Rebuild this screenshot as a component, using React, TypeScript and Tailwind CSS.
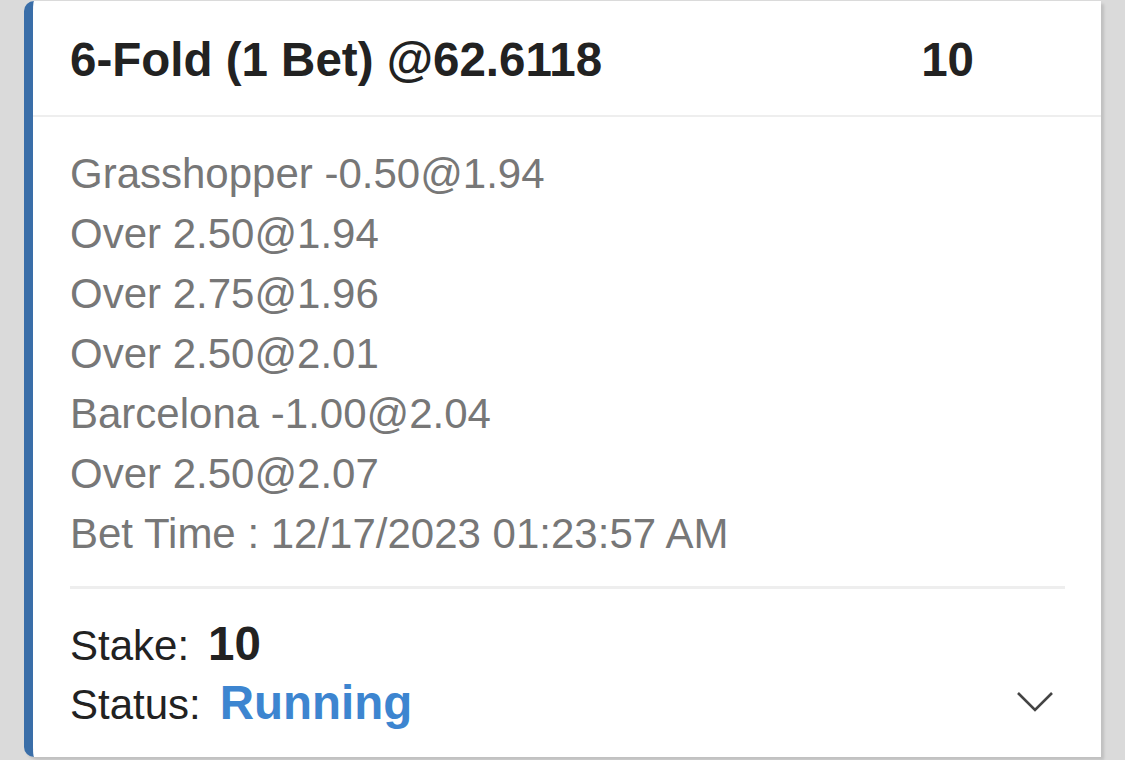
import React from "react";

const legs = [
  "Grasshopper -0.50@1.94",
  "Over 2.50@1.94",
  "Over 2.75@1.96",
  "Over 2.50@2.01",
  "Barcelona -1.00@2.04",
  "Over 2.50@2.07",
];

export default function App() {
  return (
    <div
      className="w-[1125px] h-[760px] bg-[#dadada] pl-[24px] pt-[1px] overflow-hidden"
      style={{ fontFamily: '"Liberation Sans", Arial, sans-serif' }}
    >
      <div className="w-[1077px] h-[756px] bg-white border-l-[9px] border-[#3a6ea8] rounded-l-[10px] shadow-[3px_3px_3px_rgba(0,0,0,0.12)] flex flex-col">
        <div className="h-[114px] flex items-center justify-between pl-[37px] pr-[127px] pt-[4px]">
          <div className="text-[47.5px] font-bold text-[#222222] leading-none">6-Fold (1 Bet) @62.6118</div>
          <div className="text-[47.5px] font-bold text-[#222222] leading-none">10</div>
        </div>
        <div className="h-[2px] bg-[#eeeeee]" />
        <div className="pl-[37px] pr-[36px] pt-[27px] flex flex-col">
          {legs.map((l) => (
            <div key={l} className="text-[42px] leading-[60px] text-[#777777]">{l}</div>
          ))}
          <div className="text-[42px] leading-[60px] text-[#777777]">Bet Time : 12/17/2023 01:23:57 AM</div>
          <div className="h-[3px] bg-[#eeeeee] mt-[22px]" />
          <div className="pt-[25px] flex flex-col">
            <div className="flex items-baseline h-[60px] leading-[60px]">
              <span className="text-[42px] text-[#222222]">Stake:</span>
              <span className="text-[47.5px] font-bold text-[#222222] ml-[19px]">10</span>
            </div>
            <div className="flex items-center justify-between h-[60px]">
              <div className="flex items-baseline leading-[60px]">
                <span className="text-[42px] text-[#222222]">Status:</span>
                <span className="text-[47.5px] font-bold text-[#3d85d0] ml-[19px]">Running</span>
              </div>
              <svg width="38" height="22" viewBox="0 0 38 22" className="mr-[11px] mb-[4px]">
                <polyline points="2,2 19,19 36,2" fill="none" stroke="#444444" strokeWidth="2.6" />
              </svg>
            </div>
          </div>
        </div>
      </div>
    </div>
  );
}
